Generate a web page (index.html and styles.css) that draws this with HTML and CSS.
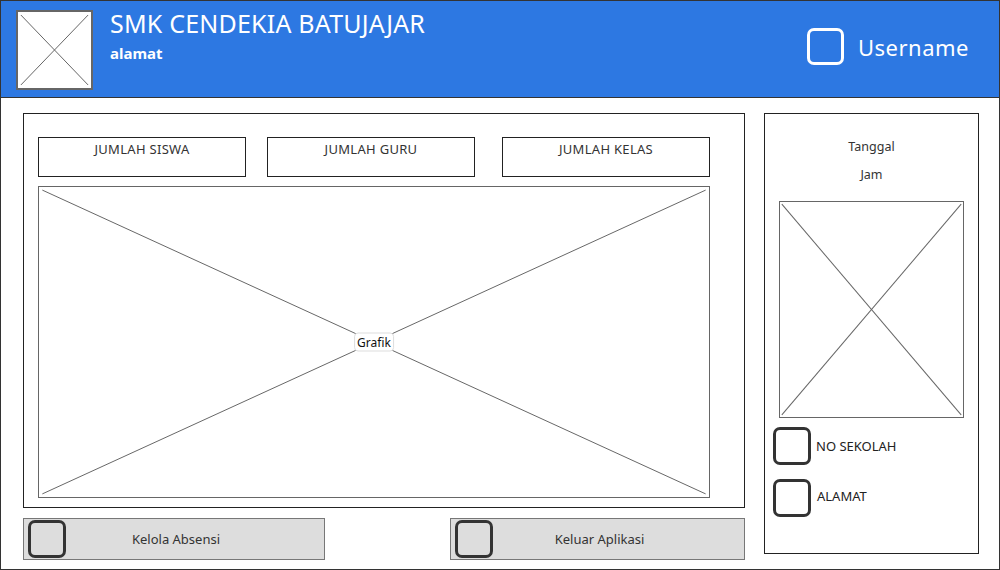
FILE: index.html
```html
<!DOCTYPE html>
<html>
<head>
<meta charset="utf-8">
<link rel="stylesheet" href="styles.css">
</head>
<body>
<div class="page">
  <header class="header">
    <div class="logo">
      <svg class="xsvg" viewBox="0 0 100 100" preserveAspectRatio="none"><line x1="4" y1="4" x2="96" y2="96"/><line x1="96" y1="4" x2="4" y2="96"/></svg>
    </div>
    <div class="brand">
      <div class="title">SMK CENDEKIA BATUJAJAR</div>
      <div class="subtitle">alamat</div>
    </div>
    <div class="user">
      <span class="user-icon"></span>
      <span class="user-name">Username</span>
    </div>
  </header>
  <div class="content">
    <div class="left">
      <div class="main-panel">
        <div class="stats">
          <div class="stat">JUMLAH SISWA</div>
          <div class="stat">JUMLAH GURU</div>
          <div class="stat stat-3">JUMLAH KELAS</div>
        </div>
        <div class="chart">
          <svg class="xsvg" viewBox="0 0 100 100" preserveAspectRatio="none"><line x1="0.5" y1="1" x2="99.5" y2="99"/><line x1="99.5" y1="1" x2="0.5" y2="99"/></svg>
          <span class="chart-label">Grafik</span>
        </div>
      </div>
      <div class="actions">
        <div class="btn"><span class="sq"></span><span class="btn-text">Kelola Absensi</span></div>
        <div class="btn btn-exit"><span class="sq"></span><span class="btn-text">Keluar Aplikasi</span></div>
      </div>
    </div>
    <aside class="side">
      <div class="side-text date">Tanggal</div>
      <div class="side-text time">Jam</div>
      <div class="side-img">
        <svg class="xsvg" viewBox="0 0 100 100" preserveAspectRatio="none"><line x1="1" y1="1" x2="99" y2="99"/><line x1="99" y1="1" x2="1" y2="99"/></svg>
      </div>
      <div class="info"><span class="sq"></span><span class="info-text">NO SEKOLAH</span></div>
      <div class="info info-2"><span class="sq"></span><span class="info-text">ALAMAT</span></div>
    </aside>
  </div>
</div>
</body>
</html>
```

FILE: styles.css
```css
* { box-sizing: border-box; }
html, body { margin: 0; padding: 0; background: #fff; }
body { font-family: "Noto Sans", "Open Sans", sans-serif; color: #333; }

.page {
  width: 1000px;
  height: 570px;
  border: 1px solid #333;
  display: flex;
  flex-direction: column;
  overflow: hidden;
}

.header {
  height: 97px;
  flex: none;
  background: #2d78e2;
  border-bottom: 1px solid #333;
  display: flex;
  align-items: flex-start;
  padding: 9px 30px 0 15px;
  color: #fff;
}
.logo {
  width: 77px;
  height: 80px;
  background: #fff;
  border: 2px solid #666;
  flex: none;
}
.xsvg { display: block; width: 100%; height: 100%; }
.xsvg line { stroke: #666; stroke-width: 1; vector-effect: non-scaling-stroke; }

.brand { margin-left: 17px; margin-top: -2px; }
.title { font-size: 25px; line-height: 30px; letter-spacing: 0.2px; }
.subtitle { font-size: 15px; font-weight: 700; line-height: 20px; margin-top: 5px; }

.user {
  margin-left: auto;
  margin-top: 18px;
  display: flex;
  align-items: center;
}
.user-icon {
  width: 37px;
  height: 37px;
  border: 3px solid #fff;
  border-radius: 7px;
}
.user-name { font-size: 22px; letter-spacing: 0.5px; margin-left: 14px; line-height: 30px; }

.content {
  flex: 1;
  display: flex;
  padding: 15px 0 0 22px;
}
.left {
  width: 722px;
  flex: none;
  display: flex;
  flex-direction: column;
  margin-right: 19px;
}

.main-panel {
  width: 722px;
  height: 395px;
  flex: none;
  border: 1px solid #222;
  padding: 23px 0 0 14px;
}
.stats {
  width: 672px;
  display: flex;
  gap: 21px;
}
.stat {
  width: 208px;
  height: 40px;
  border: 1px solid #222;
  text-align: center;
  font-size: 13px;
  letter-spacing: 0.3px;
  line-height: 18px;
  padding-top: 2px;
}
.stat-3 { margin-left: 6px; }
.chart {
  position: relative;
  width: 672px;
  height: 312px;
  margin-top: 9px;
  border: 1px solid #666;
}
.chart-label {
  position: absolute;
  left: 50%;
  top: 50%;
  transform: translate(-50%, -50%);
  background: #fff;
  border: 1px solid #ddd;
  border-radius: 4px;
  padding: 0 2px;
  font-size: 12px;
  line-height: 17px;
  color: #111;
}

.actions {
  margin-top: 10px;
  display: flex;
  justify-content: space-between;
}
.btn {
  width: 302px;
  height: 42px;
  background: #dddddd;
  border: 1px solid #777;
  display: grid;
  grid-template-columns: 42px 1fr 42px;
  align-items: center;
  padding: 0 0 0 4px;
}
.btn-exit { width: 295px; }
.btn-text { text-align: center; font-size: 13px; }

.sq {
  display: block;
  width: 38px;
  height: 38px;
  border: 3px solid #333;
  border-radius: 7px;
  flex: none;
}

.side {
  width: 215px;
  flex: none;
  height: 441px;
  border: 1px solid #222;
  display: flex;
  flex-direction: column;
  align-items: center;
}
.side-text { font-size: 12.5px; line-height: 18px; }
.date { margin-top: 24px; }
.time { margin-top: 10px; }
.side-img {
  width: 185px;
  height: 217px;
  margin-top: 17px;
  border: 1px solid #666;
}
.info {
  align-self: flex-start;
  margin-left: 8px;
  margin-top: 9px;
  display: flex;
  align-items: center;
}
.info-2 { margin-top: 14px; }
.info-text { font-size: 13px; margin-left: 5px; color: #222; }
.info-2 .info-text { margin-left: 6px; margin-top: -4px; }
```
